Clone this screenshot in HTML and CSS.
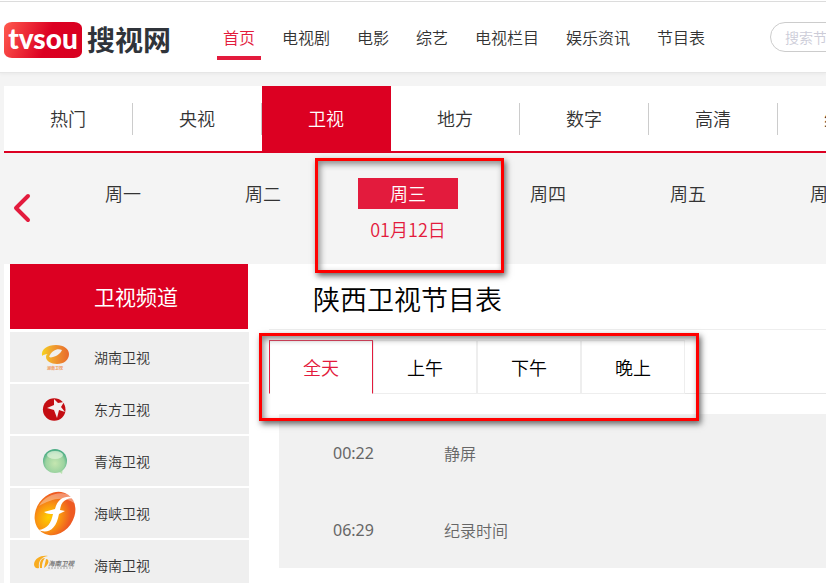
FILE: index.html
```html
<!DOCTYPE html>
<html lang="zh-CN">
<head>
<meta charset="utf-8">
<title>陕西卫视节目表</title>
<link rel="stylesheet" href="styles.css">
</head>
<body>
<header class="header">
  <a class="logo" href="#"><span class="logo-badge">tvsou</span><span class="logo-name">搜视网</span></a>
  <nav class="nav">
    <a class="nav-link current" href="#">首页</a>
    <a class="nav-link" href="#">电视剧</a>
    <a class="nav-link" href="#">电影</a>
    <a class="nav-link" href="#">综艺</a>
    <a class="nav-link" href="#">电视栏目</a>
    <a class="nav-link" href="#">娱乐资讯</a>
    <a class="nav-link" href="#">节目表</a>
  </nav>
  <input class="search" type="search" placeholder="搜索节目" aria-label="搜索节目">
</header>
<div class="page">
  <nav class="categories">
    <a class="category" href="#">热门</a>
    <a class="category" href="#">央视</a>
    <a class="category current" href="#">卫视</a>
    <a class="category" href="#">地方</a>
    <a class="category" href="#">数字</a>
    <a class="category" href="#">高清</a>
    <a class="category" href="#">综合</a>
  </nav>
  <div class="week">
    <button class="prev" type="button" aria-label="上一周">
      <svg width="18" height="30" viewBox="0 0 18 30"><path d="M15 3 3 15 15 27" fill="none" stroke="#e31b3d" stroke-width="4" stroke-linecap="round" stroke-linejoin="round"/></svg>
    </button>
    <a class="day" href="#"><span class="day-name">周一</span></a>
    <a class="day" href="#"><span class="day-name">周二</span></a>
    <a class="day current" href="#"><span class="day-name">周三</span><span class="day-date">01月12日</span><span class="mark mark-day"></span></a>
    <a class="day" href="#"><span class="day-name">周四</span></a>
    <a class="day" href="#"><span class="day-name">周五</span></a>
    <a class="day" href="#"><span class="day-name">周六</span></a>
  </div>
  <div class="main">
    <aside class="sidebar">
      <h2 class="sidebar-title">卫视频道</h2>
      <a class="channel" href="#">
        <svg class="channel-icon" viewBox="0 0 50 50">
          <defs><linearGradient id="hn" x1="0" x2="1"><stop offset="0" stop-color="#f6d21f"/><stop offset=".4" stop-color="#f0a02f"/><stop offset="1" stop-color="#e8692c"/></linearGradient></defs>
          <path fill="url(#hn)" fill-rule="evenodd" d="M12 24C11 17 17 13 26 13C34 13 39 17 39 22C39 28 34 32 27 32C21 32 16 29 16 25C16 23 17 22 18 22C15 22 13 23 12 24ZM20 23C18 25 20 26 23 25C27 24 31 21 32 18C27 16 22 19 20 23Z"/>
          <text x="25" y="38" font-size="4" font-weight="700" text-anchor="middle" fill="#ef9a60">湖南卫视</text>
        </svg>
        <span>湖南卫视</span></a>
      <a class="channel" href="#">
        <svg class="channel-icon" viewBox="0 0 50 50"><circle cx="24.200" cy="25.500" r="11.300" fill="#c40d12"/><path fill="#f5eeee" d="M24 15L28 19L34 18L31 23L35 28L29 26L27 34L24 26L17 24L24 21Z"/></svg>
        <span>东方卫视</span></a>
      <a class="channel" href="#">
        <svg class="channel-icon" viewBox="0 0 50 50">
          <defs><radialGradient id="qh" cx=".5" cy=".6" r=".55"><stop offset="0" stop-color="#c5e6b0"/><stop offset=".7" stop-color="#9cd3a0"/><stop offset="1" stop-color="#4fae86"/></radialGradient></defs>
          <path fill="#b9e3b0" d="M28 35 32 38 33 32Z"/><circle cx="25" cy="25" r="12" fill="url(#qh)"/><ellipse cx="25" cy="19" rx="8" ry="4" fill="#e2f3dd" opacity=".7"/></svg>
        <span>青海卫视</span></a>
      <a class="channel" href="#">
        <svg class="channel-icon" viewBox="0 0 50 50">
          <defs><radialGradient id="hx" cx=".42" cy=".65" r=".55"><stop offset="0" stop-color="#ffd000"/><stop offset=".5" stop-color="#fa9a10"/><stop offset="1" stop-color="#ee5a22"/></radialGradient></defs>
          <path fill="#fff" d="M0 1H50V50H0Z"/><ellipse cx="25" cy="25.500" rx="19" ry="23" transform="rotate(35 25 25.500)" fill="url(#hx)"/>
          <path fill="#fff" opacity=".35" d="M9 18C14 8 27 3 37 6C42 8 44 11 44 15C32 7 20 12 9 18Z"/>
          <path fill="#fff" d="M45 10C37 7 28 9 25 21L14 24C17 26 20 26 23 26C21 35 18 41 8 42C18 46 26 42 29 26L35 23L30 22C31 13 36 10 45 10Z"/></svg>
        <span>海峡卫视</span></a>
      <a class="channel" href="#">
        <svg class="channel-icon" viewBox="0 0 50 50">
          <path fill="#f8ac20" d="M4 24C5 18 11 15 18 16C11 17 8 21 9 28C6 29 4 27 4 24ZM10 28C9 21 12 18 15 18C12 22 12 25 12 28ZM14 28 16 19C20 19 19 25 14 28Z"/>
          <text x="18" y="26" font-size="6.500" font-weight="700" font-style="italic" fill="#777">海南卫视</text><path stroke="#aaa" stroke-dasharray="2 1" d="M18 28H43"/></svg>
        <span>海南卫视</span></a>
    </aside>
    <section class="content">
      <h1 class="title">陕西卫视节目表</h1>
      <div class="tabs">
        <button class="tab current" type="button">全天</button>
        <button class="tab" type="button">上午</button>
        <button class="tab" type="button">下午</button>
        <button class="tab" type="button">晚上</button>
        <span class="mark mark-tabs"></span>
      </div>
      <table class="programs">
        <tr><td class="time">00:22</td><td>静屏</td></tr>
        <tr><td class="time">06:29</td><td>纪录时间</td></tr>
      </table>
    </section>
  </div>
</div>
</body>
</html>
```
FILE: styles.css
```css
* { box-sizing: border-box; }
body {
  margin: 0;
  min-height: 100vh;
  overflow: hidden;
  background: #f4f4f4;
  color: #333;
  font: 350 16px/24px "Noto Sans CJK SC", sans-serif;
}
a { color: inherit; text-decoration: none; }
button { padding: 0; border: 0; background: none; font: inherit; cursor: pointer; }

.header {
  display: flex;
  align-items: center;
  height: 73px;
  padding: 8px 0 0 4px;
  overflow: hidden;
  background: #fff;
  border-bottom: 1px solid #e6e6e6;
  box-shadow: inset 0 1px #fff, inset 0 2px #dcdcdc, 0 1px 3px #e8e8e8;
}
.logo { display: flex; flex: none; align-items: center; gap: 5px; width: 213px; }
.logo-badge {
  width: 78px;
  height: 36px;
  border-radius: 8px / 6px;
  background: linear-gradient(110deg, #ff5a4e, #dc0022 55%, #d80020);
  color: #fff;
  font: 900 28px/32px Lato, sans-serif;
  text-align: center;
}
.logo-name { color: #30343a; font-size: 28px; font-weight: 700; line-height: 34px; padding-bottom: 2px; }
.nav { display: flex; flex: none; gap: 15px; }
.nav-link { padding: 5px 6px 7px; border-bottom: 4px solid transparent; }
.nav-link.current { color: #e31b3d; border-color: #e31b3d; }
.search {
  flex: none;
  width: 240px;
  height: 30px;
  margin: 0 0 6px 59px;
  padding: 0 14px;
  border: 1px solid #ccc;
  border-radius: 15px;
  background: #fff;
  font: inherit;
  font-size: 14px;
}
.search::placeholder { color: #ccccd8; }

.page { padding: 13px 0 0 4px; }
.categories {
  display: flex;
  height: 67px;
  overflow: hidden;
  background: #fff;
  border-bottom: 2px solid #dc0022;
}
.category {
  display: flex;
  flex: none;
  align-items: center;
  justify-content: center;
  width: 129px;
  padding: 0 1px 2px 0;
  font-size: 18px;
  background: linear-gradient(#ccc, #ccc) right / 1px 32px no-repeat;
}
.category.current { background: #dc0022; color: #fff; }

.week { display: flex; height: 111px; }
.prev { flex: none; align-self: flex-start; width: 49px; height: 30px; margin-top: 40px; padding-left: 9px; text-align: left; line-height: 0; }
.day { position: relative; flex: none; width: 140px; padding-top: 25px; font-size: 18px; text-align: center; }
.day.current { margin-left: 5px; color: #e31b3d; }
.day-name { display: block; width: 100px; margin: 0 auto; line-height: 31px; }
.day.current .day-name { background: #e31b3d; color: #fff; }
.day-date { display: block; line-height: 41px; }

.mark {
  position: absolute;
  border: 3px solid #f00;
  box-shadow: 2px 3px 6px #666, inset 2px 3px 6px #888;
  pointer-events: none;
}
.mark-day { inset: 5px -26px -9px -23px; z-index: 1; }
.mark-tabs { top: -7px; bottom: -28px; left: -10px; width: 440px; }

.main { display: flex; background: #fff; padding-left: 6px; }
.sidebar { display: flex; flex: none; flex-direction: column; gap: 2px; width: 239px; }
.sidebar-title {
  height: 65px;
  margin: 0 1px 1px 0;
  padding-left: 14px;
  background: #dc0022;
  color: #fff;
  font-size: 21px;
  font-weight: 400;
  line-height: 65px;
  text-align: center;
}
.channel { display: flex; flex: none; align-items: center; gap: 14px; height: 50px; padding-left: 20px; background: #efefef; font-size: 14px; }
.channel-icon { width: 50px; height: 50px; }

.content { flex: 1; min-width: 0; padding-left: 20px; }
.title {
  margin: 0 0 10px;
  padding: 5px 0 0 44px;
  border-bottom: 1px solid #eee;
  color: #000;
  font-size: 27px;
  font-weight: 350;
  line-height: 60px;
}
.tabs { position: relative; display: flex; height: 54px; border-bottom: 1px solid #e6e6e6; }
.tab { width: 104px; height: 54px; border: 1px solid #eee; color: #000; font-size: 18px; }
.tab.current { border-color: #e31b3d; border-bottom-color: #fff; color: #e31b3d; }
.programs { width: calc(100% - 10px); margin: 20px 0 15px 10px; border-spacing: 0; background: #f1f1f1; color: #666; }
.programs td { height: 77px; padding: 0; }
.programs .time { width: 165px; padding-left: 54px; font-family: "Noto Sans", sans-serif; font-weight: 400; }
```
